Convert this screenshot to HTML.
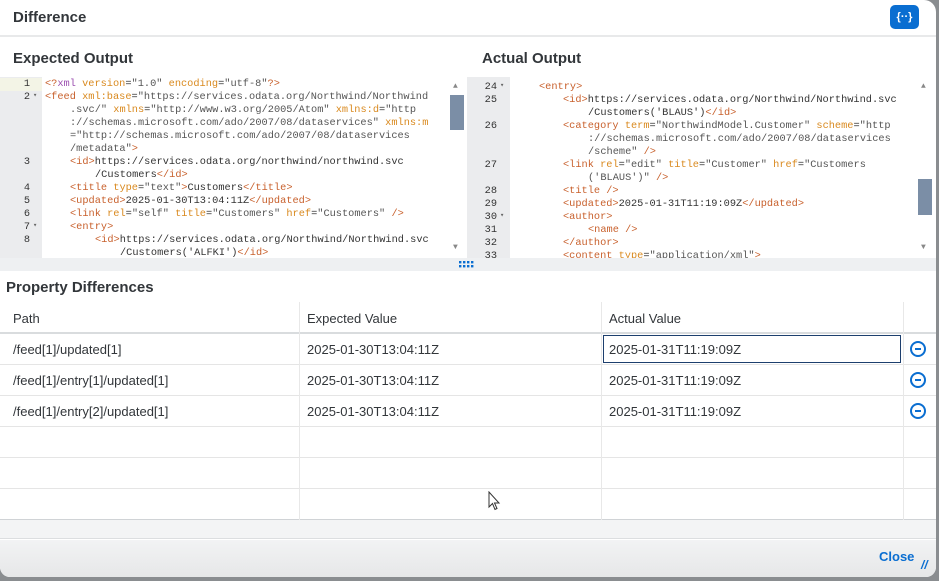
<!DOCTYPE html>
<html><head><meta charset="utf-8"><style>
*{margin:0;padding:0;box-sizing:border-box}
body{width:939px;height:581px;background:#8a8d90;position:relative;overflow:hidden;font-family:"Liberation Sans",sans-serif;color:#32363a}
#dlg{position:absolute;left:0;top:0;width:936px;height:577px;background:#fff;border-radius:0 12px 10px 10px;overflow:hidden}
.abs{position:absolute}
.h{font-weight:bold;color:#32363a}
.ed{position:absolute;top:77px;height:181px;background:#fff;overflow:hidden;font-family:"Liberation Mono",monospace;font-size:10.3px;color:#333}
.g{position:absolute;top:0;bottom:0;background:#ebecee}
.ln{position:absolute;white-space:pre;line-height:13px;height:13px}
.n{position:absolute;line-height:13px;text-align:right;color:#333;font-family:"Liberation Mono",monospace;font-size:10.3px}
.t{color:#c8602c}.a{color:#d9891e}.v{color:#555}.p{color:#9b4fb0}
.sb{position:absolute;width:14px;background:#7b8ea6}
.tr{position:absolute;left:0;width:936px;border-bottom:1px solid #e5e5e5;height:31px}
.c{position:absolute;font-size:13px;color:#32363a;top:8px}
.vl{position:absolute;top:302px;height:218px;width:1px;background:#e8e8e8}
.mi{position:absolute;left:910px;width:16px;height:16px;border:2px solid #0a6ed1;border-radius:50%}
.mi:after{content:"";position:absolute;left:3px;top:5px;width:6px;height:2px;background:#0a6ed1}
</style></head><body>
<div id="dlg">
<div class="abs h" style="left:13px;top:9px;font-size:15px">Difference</div>
<div class="abs" style="left:890px;top:5px;width:29px;height:24px;background:#0a6ed1;border-radius:5px;color:#fff;font-size:11px;font-weight:bold;text-align:center;line-height:24px">{··}</div>
<div class="abs" style="left:0;top:35px;width:936px;height:2px;background:#e8e9ea"></div>
<div class="abs h" style="left:13px;top:50px;font-size:15px">Expected Output</div>
<div class="abs h" style="left:482px;top:50px;font-size:15px">Actual Output</div>

<div class="ed" style="left:0;width:466px">
<div class="g" style="left:0;width:42px"></div>
<div class="abs" style="left:0;top:1px;width:42px;height:13px;background:#f3f4e6"></div>
<div class="n" style="left:0;width:30px;top:1px">1</div>
<div class="n" style="left:0;width:30px;top:14px">2</div><div class="abs" style="left:33px;top:14px;font-size:7px;color:#666">▾</div>
<div class="n" style="left:0;width:30px;top:79px">3</div>
<div class="n" style="left:0;width:30px;top:105px">4</div>
<div class="n" style="left:0;width:30px;top:118px">5</div>
<div class="n" style="left:0;width:30px;top:131px">6</div>
<div class="n" style="left:0;width:30px;top:144px">7</div><div class="abs" style="left:33px;top:144px;font-size:7px;color:#666">▾</div>
<div class="n" style="left:0;width:30px;top:157px">8</div>
<div class="ln" style="left:45px;top:1px"><span class="t">&lt;?</span><span class="p">xml</span> <span class="a">version</span>=<span class="v">"1.0"</span> <span class="a">encoding</span>=<span class="v">"utf-8"</span><span class="t">?&gt;</span></div>
<div class="ln" style="left:45px;top:14px"><span class="t">&lt;feed</span> <span class="a">xml:base</span>=<span class="v">"https://services.odata.org/Northwind/Northwind</span></div>
<div class="ln" style="left:70px;top:27px"><span class="v">.svc/"</span> <span class="a">xmlns</span>=<span class="v">"http://www.w3.org/2005/Atom"</span> <span class="a">xmlns:d</span>=<span class="v">"http</span></div>
<div class="ln" style="left:70px;top:40px"><span class="v">://schemas.microsoft.com/ado/2007/08/dataservices"</span> <span class="a">xmlns:m</span></div>
<div class="ln" style="left:70px;top:53px"><span class="v">="http://schemas.microsoft.com/ado/2007/08/dataservices</span></div>
<div class="ln" style="left:70px;top:66px"><span class="v">/metadata"</span><span class="t">&gt;</span></div>
<div class="ln" style="left:70px;top:79px"><span class="t">&lt;id&gt;</span>https://services.odata.org/northwind/northwind.svc</div>
<div class="ln" style="left:95px;top:92px">/Customers<span class="t">&lt;/id&gt;</span></div>
<div class="ln" style="left:70px;top:105px"><span class="t">&lt;title</span> <span class="a">type</span>=<span class="v">"text"</span><span class="t">&gt;</span>Customers<span class="t">&lt;/title&gt;</span></div>
<div class="ln" style="left:70px;top:118px"><span class="t">&lt;updated&gt;</span>2025-01-30T13:04:11Z<span class="t">&lt;/updated&gt;</span></div>
<div class="ln" style="left:70px;top:131px"><span class="t">&lt;link</span> <span class="a">rel</span>=<span class="v">"self"</span> <span class="a">title</span>=<span class="v">"Customers"</span> <span class="a">href</span>=<span class="v">"Customers"</span> <span class="t">/&gt;</span></div>
<div class="ln" style="left:70px;top:144px"><span class="t">&lt;entry&gt;</span></div>
<div class="ln" style="left:95px;top:157px"><span class="t">&lt;id&gt;</span>https://services.odata.org/Northwind/Northwind.svc</div>
<div class="ln" style="left:120px;top:170px">/Customers('ALFKI')<span class="t">&lt;/id&gt;</span></div>
<div class="abs" style="left:453px;top:5px;font-size:8px;color:#888">▲</div>
<div class="sb" style="left:450px;top:18px;height:35px"></div>
<div class="abs" style="left:453px;top:166px;font-size:8px;color:#888">▼</div>
</div>

<div class="ed" style="left:467px;width:469px">
<div class="g" style="left:0;width:43px"></div>
<div class="n" style="left:0;width:30px;top:4px">24</div><div class="abs" style="left:33px;top:4px;font-size:7px;color:#666">▾</div>
<div class="n" style="left:0;width:30px;top:17px">25</div>
<div class="n" style="left:0;width:30px;top:43px">26</div>
<div class="n" style="left:0;width:30px;top:82px">27</div>
<div class="n" style="left:0;width:30px;top:108px">28</div>
<div class="n" style="left:0;width:30px;top:121px">29</div>
<div class="n" style="left:0;width:30px;top:134px">30</div><div class="abs" style="left:33px;top:134px;font-size:7px;color:#666">▾</div>
<div class="n" style="left:0;width:30px;top:147px">31</div>
<div class="n" style="left:0;width:30px;top:160px">32</div>
<div class="n" style="left:0;width:30px;top:173px">33</div>
<div class="ln" style="left:72px;top:4px"><span class="t">&lt;entry&gt;</span></div>
<div class="ln" style="left:96px;top:17px"><span class="t">&lt;id&gt;</span>https://services.odata.org/Northwind/Northwind.svc</div>
<div class="ln" style="left:121px;top:30px">/Customers('BLAUS')<span class="t">&lt;/id&gt;</span></div>
<div class="ln" style="left:96px;top:43px"><span class="t">&lt;category</span> <span class="a">term</span>=<span class="v">"NorthwindModel.Customer"</span> <span class="a">scheme</span>=<span class="v">"http</span></div>
<div class="ln" style="left:121px;top:56px"><span class="v">://schemas.microsoft.com/ado/2007/08/dataservices</span></div>
<div class="ln" style="left:121px;top:69px"><span class="v">/scheme"</span> <span class="t">/&gt;</span></div>
<div class="ln" style="left:96px;top:82px"><span class="t">&lt;link</span> <span class="a">rel</span>=<span class="v">"edit"</span> <span class="a">title</span>=<span class="v">"Customer"</span> <span class="a">href</span>=<span class="v">"Customers</span></div>
<div class="ln" style="left:121px;top:95px"><span class="v">('BLAUS')"</span> <span class="t">/&gt;</span></div>
<div class="ln" style="left:96px;top:108px"><span class="t">&lt;title /&gt;</span></div>
<div class="ln" style="left:96px;top:121px"><span class="t">&lt;updated&gt;</span>2025-01-31T11:19:09Z<span class="t">&lt;/updated&gt;</span></div>
<div class="ln" style="left:96px;top:134px"><span class="t">&lt;author&gt;</span></div>
<div class="ln" style="left:121px;top:147px"><span class="t">&lt;name /&gt;</span></div>
<div class="ln" style="left:96px;top:160px"><span class="t">&lt;/author&gt;</span></div>
<div class="ln" style="left:96px;top:173px"><span class="t">&lt;content</span> <span class="a">type</span>=<span class="v">"application/xml"</span><span class="t">&gt;</span></div>
<div class="abs" style="left:454px;top:5px;font-size:8px;color:#888">▲</div>
<div class="sb" style="left:451px;top:102px;height:36px"></div>
<div class="abs" style="left:454px;top:166px;font-size:8px;color:#888">▼</div>
</div>

<div class="abs" style="left:0;top:258px;width:936px;height:13px;background:#eef0f2"></div>
<svg class="abs" style="left:459px;top:261px" width="16" height="7" viewBox="0 0 16 7"><g fill="#0a6ed1"><rect x="0" y="0" width="2.4" height="2.4"/><rect x="4" y="0" width="2.4" height="2.4"/><rect x="8" y="0" width="2.4" height="2.4"/><rect x="12" y="0" width="2.4" height="2.4"/><rect x="0" y="4" width="2.4" height="2.4"/><rect x="4" y="4" width="2.4" height="2.4"/><rect x="8" y="4" width="2.4" height="2.4"/><rect x="12" y="4" width="2.4" height="2.4"/></g></svg>

<div class="abs h" style="left:6px;top:279px;font-size:15px">Property Differences</div>
<div class="tr" style="top:302px;border-bottom:2px solid #d9dcde;height:32px"><div class="c" style="left:13px;top:9px">Path</div><div class="c" style="left:307px;top:9px">Expected Value</div><div class="c" style="left:609px;top:9px">Actual Value</div></div>
<div class="tr" style="top:334px"><div class="c" style="left:13px">/feed[1]/updated[1]</div><div class="c" style="left:307px">2025-01-30T13:04:11Z</div></div>
<div class="abs" style="left:603px;top:335px;width:298px;height:28px;border:1.5px solid #1d3f6e"></div>
<div class="abs" style="left:609px;top:342px;font-size:13px">2025-01-31T11:19:09Z</div>
<div class="mi" style="top:341px"></div>
<div class="tr" style="top:365px"><div class="c" style="left:13px">/feed[1]/entry[1]/updated[1]</div><div class="c" style="left:307px">2025-01-30T13:04:11Z</div><div class="c" style="left:609px">2025-01-31T11:19:09Z</div></div>
<div class="mi" style="top:372px"></div>
<div class="tr" style="top:396px"><div class="c" style="left:13px">/feed[1]/entry[2]/updated[1]</div><div class="c" style="left:307px">2025-01-30T13:04:11Z</div><div class="c" style="left:609px">2025-01-31T11:19:09Z</div></div>
<div class="mi" style="top:403px"></div>
<div class="tr" style="top:427px"></div>
<div class="tr" style="top:458px"></div>
<div class="tr" style="top:489px;border-bottom:1px solid #d0d3d6"></div>
<div class="vl" style="left:299px"></div><div class="vl" style="left:601px"></div><div class="vl" style="left:903px"></div>
<div class="abs" style="left:0;top:520px;width:936px;height:19px;background:#f3f4f5;border-bottom:1px solid #dcdee0"></div>
<div class="abs" style="left:0;top:540px;width:936px;height:37px;background:linear-gradient(#f2f3f4,#e6e7e8)"></div>
<div class="abs" style="left:879px;top:549px;font-size:13px;font-weight:bold;color:#0a6ed1">Close</div>
<div class="abs" style="left:921px;top:558px;font-size:12px;color:#0a6ed1;font-style:italic;font-weight:bold">//</div>
<svg class="abs" style="left:488px;top:491px" width="14" height="22" viewBox="0 0 14 22"><path d="M1 1 L1 16 L4.5 12.5 L7 18.5 L9 17.5 L6.5 12 L11 12 Z" fill="#fff" stroke="#333" stroke-width="1"/></svg>
</div>
</body></html>
